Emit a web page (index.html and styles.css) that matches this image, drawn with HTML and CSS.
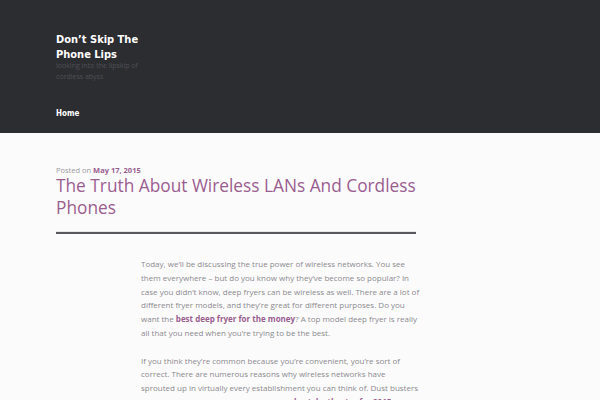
FILE: index.html
```html
<!DOCTYPE html>
<html>
<head>
<meta charset="utf-8">
<link rel="stylesheet" href="styles.css">
</head>
<body>
<header class="masthead">
  <div class="branding">
    <h1 class="site-title">Don’t Skip The Phone Lips</h1>
    <p class="site-desc">looking into the lipskip of cordless abyss</p>
  </div>
  <nav class="nav"><a href="#">Home</a></nav>
</header>
<main class="main">
  <div class="entry-header">
    <div class="meta">Posted on <a href="#">May 17, 2015</a></div>
    <h2 class="entry-title">The Truth About Wireless LANs And Cordless Phones</h2>
  </div>
  <div class="entry-content">
    <p>Today, we’ll be discussing the true power of wireless networks. You see them everywhere – but do you know why they’ve become so popular? In case you didn’t know, deep fryers can be wireless as well. There are a lot of different fryer models, and they’re great for different purposes. Do you want the <a href="#">best deep fryer for the money</a>? A top model deep fryer is really all that you need when you’re trying to be the best.</p>
    <p>If you think they’re common because you’re convenient, you’re sort of correct. There are numerous reasons why wireless networks have sprouted up in virtually every establishment you can think of. Dust busters have been around forever. However, the <a href="#">best dustbuster for 2015</a> isn’t great.</p>
  </div>
</main>
</body>
</html>
```
FILE: styles.css
```css
html, body { margin: 0; padding: 0; }
body { background: #fcfbfc; font-family: "Open Sans", "DejaVu Sans", sans-serif; }
.masthead { background: #2c2d31; height: 133px; padding: 0 56px; box-sizing: border-box; display: flex; flex-direction: column; }
.branding { padding-top: 32px; width: 100px; }
.site-title { margin: 0; font-family: "DejaVu Sans Condensed", "DejaVu Sans", sans-serif; font-weight: bold; font-size: 11px; line-height: 15px; color: #ffffff; }
.site-desc { margin: -2px 0 0; font-size: 7px; line-height: 11px; color: #4e4f55; }
.nav { margin-top: 17px; }
.nav a { font-family: "DejaVu Sans Condensed", "DejaVu Sans", sans-serif; font-weight: bold; font-size: 8px; color: #ffffff; text-decoration: none; }
.main { padding: 32px 0 0 56px; }
.entry-header { width: 360px; border-bottom: 2px solid #58585c; box-shadow: 0 -1px 0 #e6e6e8 inset; padding-bottom: 13px; }
.meta { font-size: 7.5px; line-height: 10px; color: #9a9a9e; }
.meta a { color: #9a5d8f; font-weight: bold; text-decoration: none; }
.entry-title { margin: 0; font-family: "Open Sans", sans-serif; font-weight: 400; font-size: 17.3px; line-height: 22px; color: #9a5d8f; }
.entry-content { width: 280px; margin: 23px 0 0 85px; font-size: 8px; line-height: 13.8px; color: #8a8a8e; }
.entry-content p { margin: 0 0 13.8px; }
.entry-content a { color: #9a5d8f; font-weight: bold; text-decoration: none; }
```
